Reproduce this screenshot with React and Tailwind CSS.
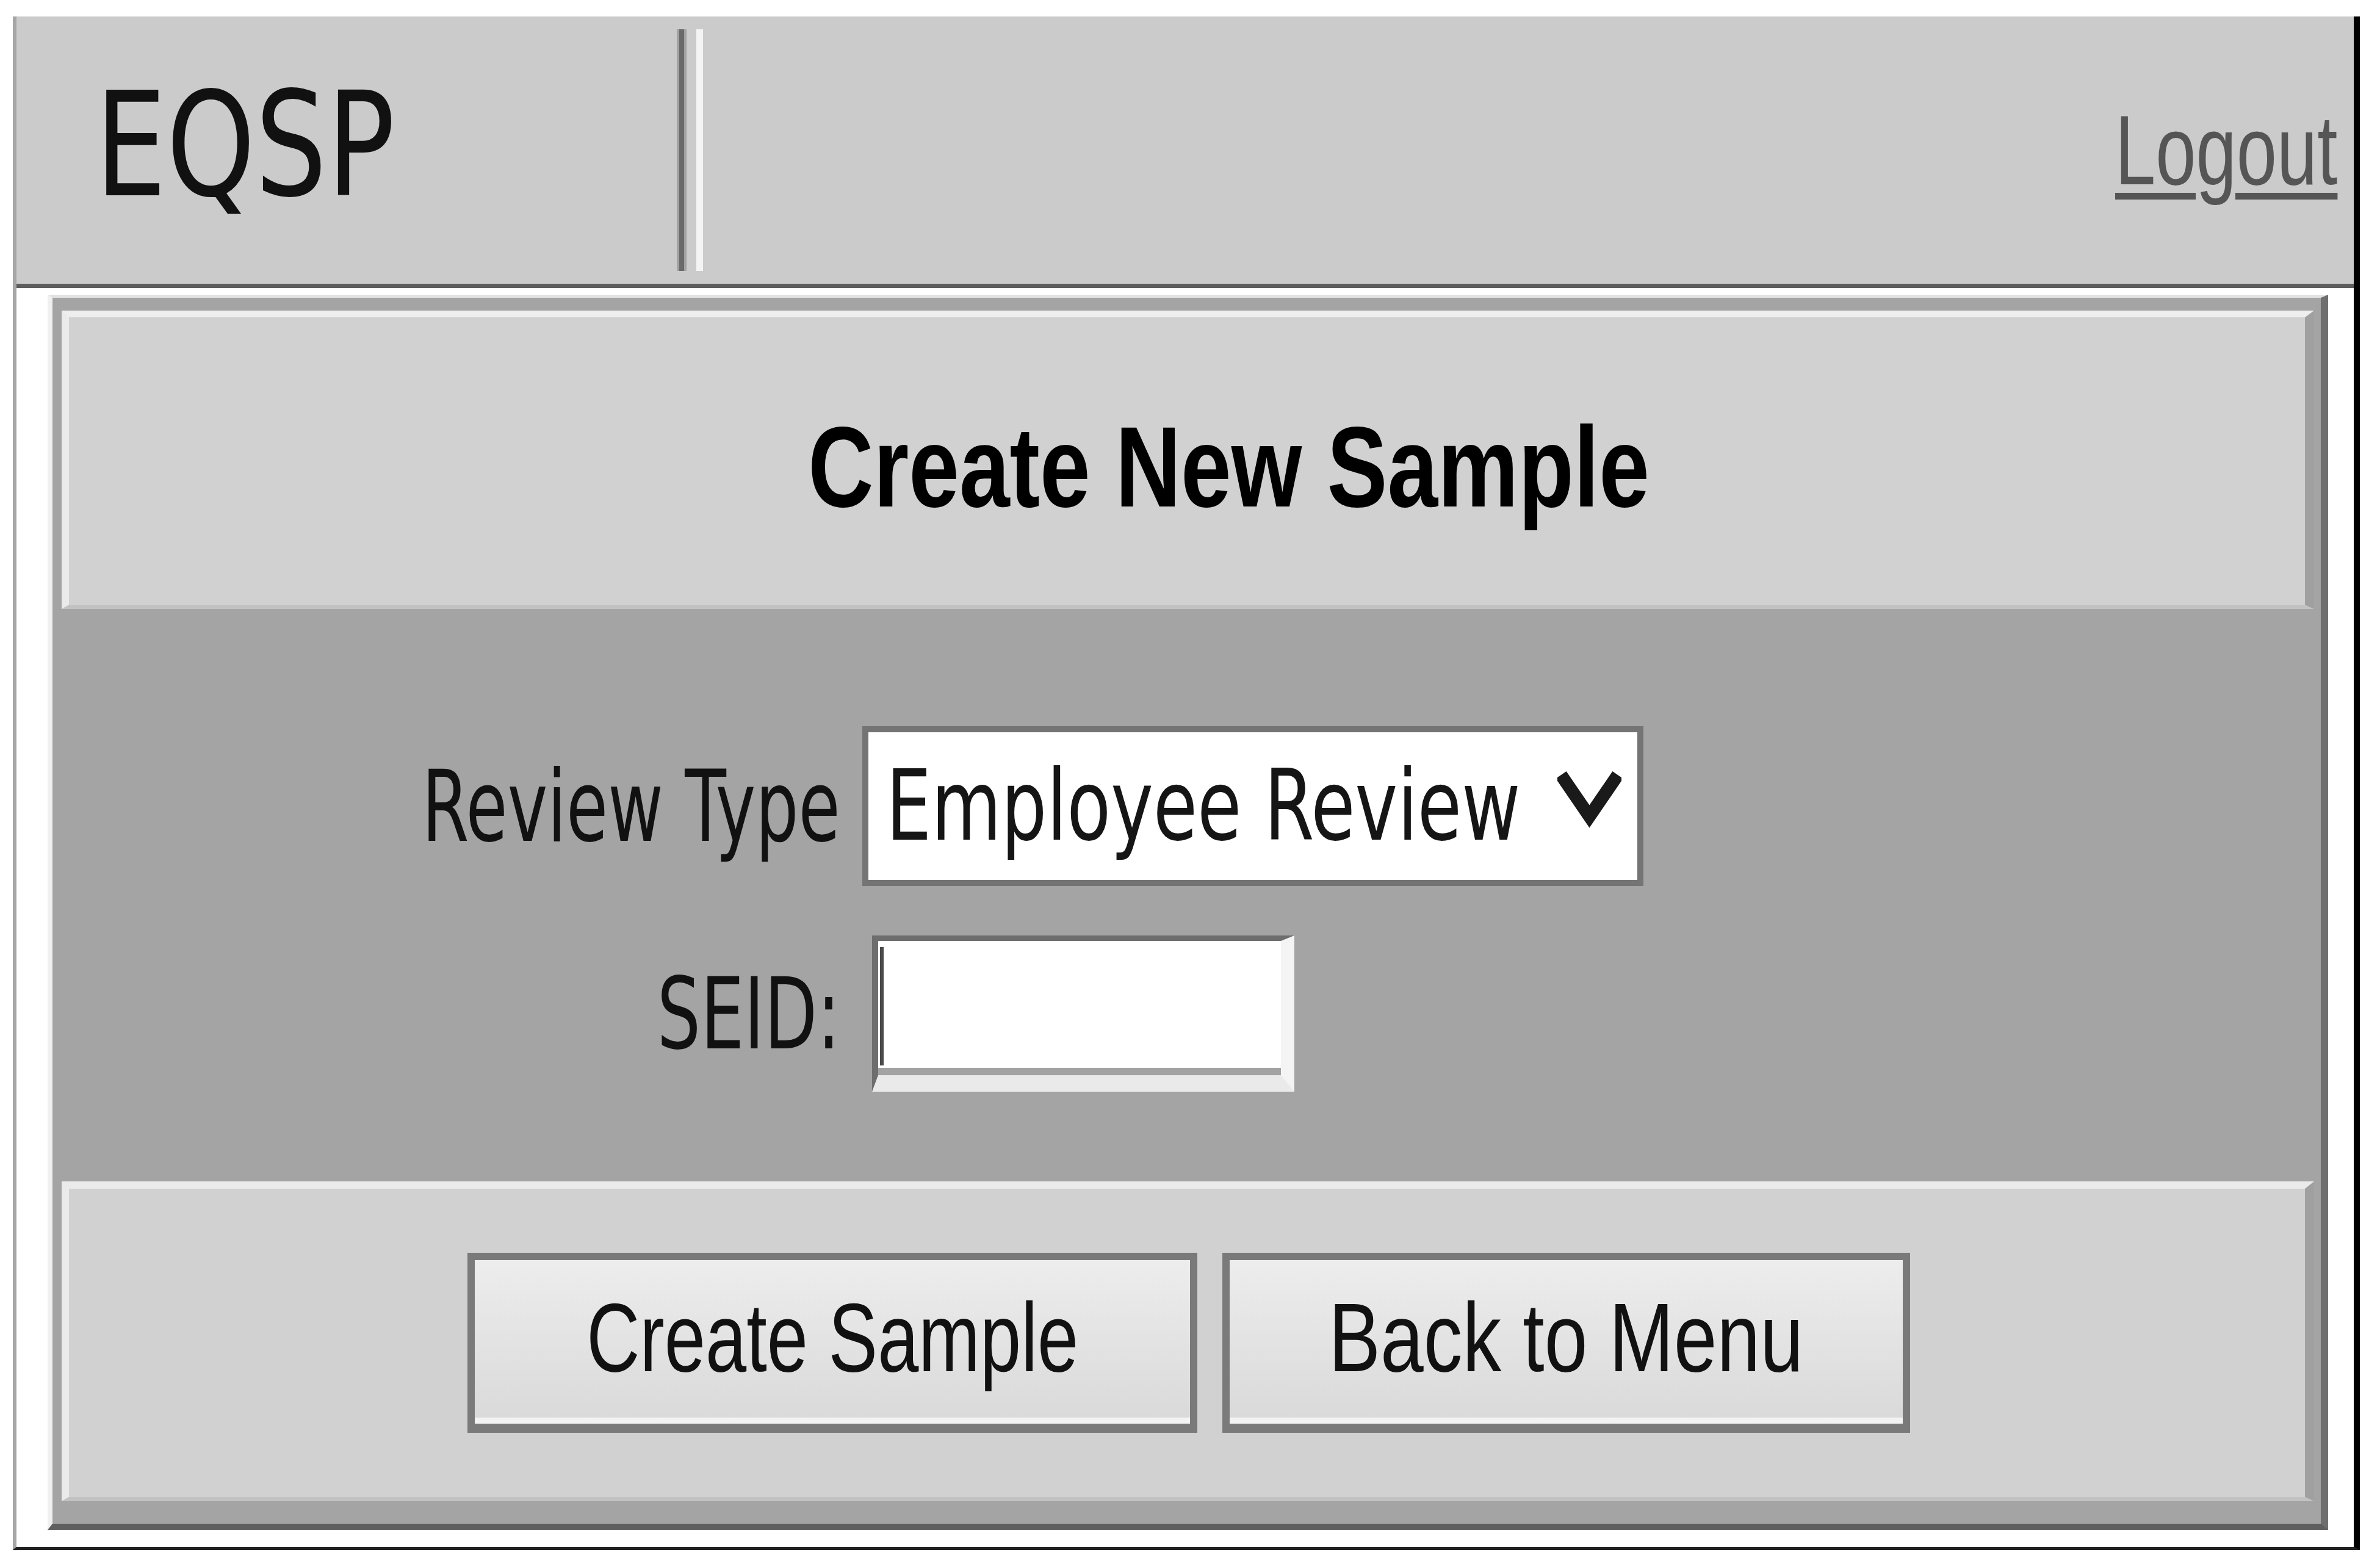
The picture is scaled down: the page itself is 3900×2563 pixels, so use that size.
import React from "react";

function Header() {
  return (
    <div className="flex h-[445px] border-b-[7px] border-b-[#5e5e5e] bg-[#cbcbcb]">
      <div className="flex w-[1082px] items-center pb-[16px] pl-[129px]">
        <span className="inline-block origin-left scale-x-[0.78] whitespace-nowrap font-['DejaVu_Sans',sans-serif] text-[237px] leading-none text-[#111]">
          EQSP
        </span>
      </div>
      <div className="my-[21px] flex">
        <div className="w-[16px] border-x-[4px] border-x-[#a2a2a2] bg-[#6a6a6a]" />
        <div className="ml-[16px] w-[11px] bg-[#f4f4f4]" />
      </div>
      <div className="flex flex-1 items-center justify-end pr-[27px]">
        <a
          href="#"
          className="inline-block origin-right scale-x-[0.74] whitespace-nowrap font-['Liberation_Sans',sans-serif] text-[161px] leading-none text-[#555555] underline decoration-[length:11px] underline-offset-[14px]"
        >
          Logout
        </a>
      </div>
    </div>
  );
}

function Chevron() {
  return (
    <svg width="105" height="96" viewBox="0 0 105 96" className="mb-[18px] shrink-0">
      <polyline
        points="6,6 52.5,74 99,6"
        fill="none"
        stroke="#1a1a1a"
        strokeWidth="21"
        strokeLinejoin="miter"
        strokeMiterlimit="10"
      />
    </svg>
  );
}

function Button({ width, scale, children }) {
  return (
    <button
      className={`flex h-[295px] items-center justify-center border-[12px] border-b-[15px] border-[#7a7a7a] bg-linear-to-b from-[#ededed] to-[#d9d9d9] pb-[14px] shadow-[inset_0_-10px_0_#f3f3f3] ${width}`}
    >
      <span
        className={`inline-block origin-center whitespace-nowrap font-['Liberation_Sans',sans-serif] text-[159px] leading-none text-[#111] ${scale}`}
      >
        {children}
      </span>
    </button>
  );
}

export default function App() {
  return (
    <div className="min-h-screen bg-white pt-[27px]">
      <div className="ml-[21px] w-[3846px] border-l-[6px] border-l-[#a6a6a6] border-r-[10px] border-r-black border-b-[5px] border-b-[#222] bg-white">
        <Header />

        <div className="pl-[51px] pr-[42px] pt-[11px] pb-[28px]">
          <div className="border-t-[5px] border-l-[8px] border-r-[12px] border-b-[10px] border-t-[#e2e2e2] border-l-[#f0f0f0] border-r-[#6f6f6f] border-b-[#5f5f5f] bg-[#a4a4a4] pl-[15px] pr-[11px] pt-[21px] pb-[37px]">
            {/* title */}
            <div className="flex h-[489px] items-center justify-center border-t-[11px] border-l-[12px] border-r-[15px] border-b-[7px] border-t-[#eeeeee] border-l-[#ebebeb] border-r-[#a0a0a0] border-b-[#c2c2c2] bg-[#d1d1d1] pl-[136px] pt-[18px]">
              <h1 className="inline-block origin-center scale-x-[0.79] whitespace-nowrap font-['Liberation_Sans',sans-serif] text-[188px] font-bold leading-none text-black">
                Create New Sample
              </h1>
            </div>

            {/* form */}
            <div className="flex h-[938px] flex-col gap-[81px] pl-[574px] pt-[192px]">
              <div className="flex items-center gap-[36px]">
                <label className="flex w-[702px] shrink-0 justify-end">
                  <span className="inline-block shrink-0 origin-right scale-x-[0.68] whitespace-nowrap font-['DejaVu_Sans',sans-serif] text-[163px] leading-none text-[#111]">
                    Review Type
                  </span>
                </label>
                <div className="flex h-[262px] w-[1280px] shrink-0 items-center border-[10px] border-[#747474] bg-white pl-[29px] pr-[26px]">
                  <div className="min-w-0 flex-1">
                    <span className="inline-block origin-left scale-x-[0.735] whitespace-nowrap font-['DejaVu_Sans',sans-serif] text-[160px] leading-none text-[#151515]">
                      Employee Review
                    </span>
                  </div>
                  <Chevron />
                </div>
              </div>

              <div className="flex items-center gap-[36px]">
                <label className="flex w-[702px] shrink-0 justify-end">
                  <span className="inline-block shrink-0 origin-right scale-x-[0.69] whitespace-nowrap font-['DejaVu_Sans',sans-serif] text-[163px] leading-none text-[#111]">
                    SEID:
                  </span>
                </label>
                <div className="ml-[16px] flex h-[256px] w-[692px] shrink-0 border-t-[9px] border-l-[10px] border-r-[22px] border-b-[27px] border-t-[#6e6e6e] border-l-[#6e6e6e] border-r-[#f4f4f4] border-b-[#eaeaea] bg-white shadow-[inset_0_-12px_0_#a3a3a3]">
                  <div className="mt-[10px] mb-[16px] ml-[3px] w-[6px] bg-[#4a4a4a]" />
                </div>
              </div>
            </div>

            {/* actions */}
            <div className="flex h-[524px] items-center justify-center gap-[41px] border-t-[12px] border-l-[12px] border-r-[15px] border-b-[7px] border-t-[#ebebeb] border-l-[#ebebeb] border-r-[#a0a0a0] border-b-[#c2c2c2] bg-[#d1d1d1] pl-[6px]">
              <Button width="w-[1196px]" scale="scale-x-[0.76]">
                Create Sample
              </Button>
              <Button width="w-[1127px]" scale="scale-x-[0.80]">
                Back to Menu
              </Button>
            </div>
          </div>
        </div>
      </div>
    </div>
  );
}
